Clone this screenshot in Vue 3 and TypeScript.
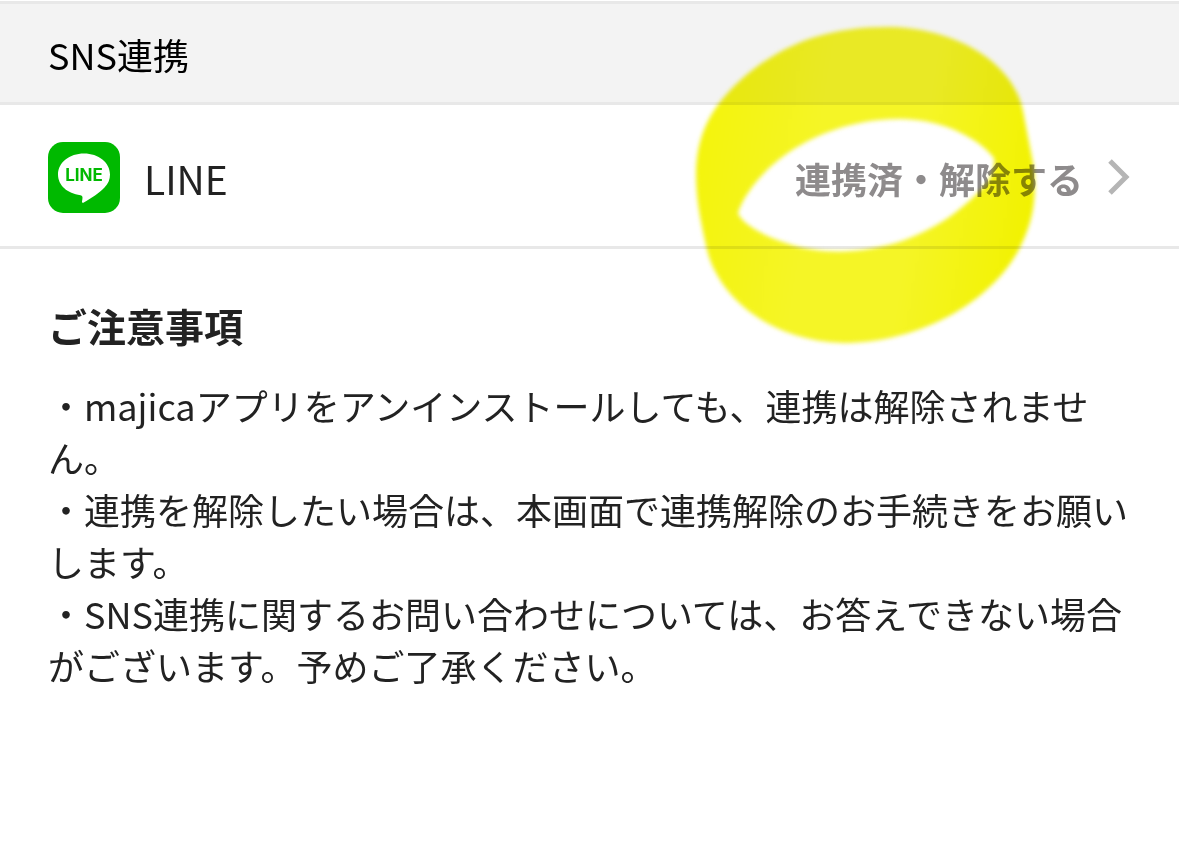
<script setup lang="ts">
const notes: string[] = [
  '・majicaアプリをアンインストールしても、連携は解除されません。',
  '・連携を解除したい場合は、本画面で連携解除のお手続きをお願いします。',
  '・SNS連携に関するお問い合わせについては、お答えできない場合がございます。予めご了承ください。',
]
</script>

<template>
  <main class="page">
    <header class="section-head">
      <h1>SNS連携</h1>
    </header>

    <section class="account">
      <svg class="logo" viewBox="0 0 72 72" aria-hidden="true">
        <rect width="72" height="71" rx="15" fill="#00b900" />
        <path
          d="M36 11.500C21.500 11.500 10 20.500 10 32.500C10 43.500 19.500 51.500 32.500 53.200C34.500 53.600 34.700 54.800 34.400 57L34 59.500C33.900 61 35 61 36.200 60.200C43 56.500 51.500 51 56.500 45.500C60.300 41.500 62 37.500 62 32.500C62 20.500 50.500 11.500 36 11.500Z"
          fill="#fff"
        />
        <text x="36" y="39" text-anchor="middle" class="logo-text">LINE</text>
      </svg>
      <span class="name">LINE</span>
      <button type="button" class="unlink">
        <span>連携済・解除する</span>
        <svg class="chevron" viewBox="0 0 24 38" aria-hidden="true">
          <path d="M3 2L19 18L3 34" fill="none" stroke="#b5b5b5" stroke-width="5" />
        </svg>
      </button>
      <svg class="marker" viewBox="0 0 380 350" aria-hidden="true">
        <defs>
          <filter
            id="marker-edge"
            x="-5%"
            y="-5%"
            width="110%"
            height="110%"
            color-interpolation-filters="sRGB"
          >
            <feGaussianBlur stdDeviation="2" />
          </filter>
          <linearGradient id="marker-ink" x1="0" y1="0.400" x2="1" y2="0.550">
            <stop offset="0" stop-color="#f4f40c" />
            <stop offset="0.350" stop-color="#f5f526" />
            <stop offset="0.650" stop-color="#f5f526" />
            <stop offset="1" stop-color="#f2f200" />
          </linearGradient>
        </defs>
        <path
          fill="url(#marker-ink)"
          fill-rule="evenodd"
          filter="url(#marker-edge)"
          d="M207 17C270 17 333 49 343 101L353 153C357 184 354 207 343 231C318 289 242 333 163 333C94 331 40 291 27 240C21 212 16 192 16 163C17 122 32 95 65 66C106 32 150 17 207 17ZM58 203C62 214 84 226 106 233C140 245 182 244 222 231C258 218 284 199 307 173C312 165 315 158 314 148C298 128 264 110 223 109C169 108 120 129 88 159C72 175 62 190 58 203Z"
        />
      </svg>
    </section>

    <section class="notice">
      <h2>ご注意事項</h2>
      <p v-for="note in notes" :key="note">{{ note }}</p>
    </section>
  </main>
</template>

<style>
body {
  margin: 0;
  background: #fff;
}
</style>

<style scoped>
.page {
  font-family: 'Noto Sans CJK JP', sans-serif;
  color: #222;
  padding-top: 1px;
}

.section-head {
  padding: 24px 48px 22px;
  background: #f3f3f3;
  border-top: 3px solid #e8e8e8;
  border-bottom: 3px solid #e8e8e8;
}

h1 {
  margin: 0;
  font-size: 36px;
  font-weight: 400;
  line-height: 52px;
  color: #000;
}

.account {
  position: relative;
  display: flex;
  align-items: center;
  padding: 37px 48px 32px;
  border-bottom: 3px solid #e8e8e8;
}

.logo {
  width: 72px;
  height: 72px;
}

.logo-text {
  font-family: Inter, sans-serif;
  font-size: 17px;
  font-weight: 700;
  fill: #00b900;
}

.name {
  margin-left: 24px;
  font-size: 39px;
  line-height: 60px;
}

.unlink {
  display: flex;
  align-items: center;
  gap: 24px;
  margin-left: auto;
  padding: 0;
  border: 0;
  background: none;
  font-family: inherit;
  font-size: 36px;
  font-weight: 700;
  line-height: 54px;
  color: #8e8b8c;
}

.chevron {
  width: 24px;
  height: 38px;
}

.marker {
  position: absolute;
  top: -95px;
  right: 119px;
  width: 380px;
  height: 350px;
  mix-blend-mode: multiply;
  pointer-events: none;
}

.notice {
  padding: 46px 48px;
}

h2 {
  margin: 0 0 24px;
  font-size: 39px;
  font-weight: 700;
  line-height: 60px;
}

p {
  margin: 0;
  font-size: 36px;
  line-height: 52px;
}
</style>
